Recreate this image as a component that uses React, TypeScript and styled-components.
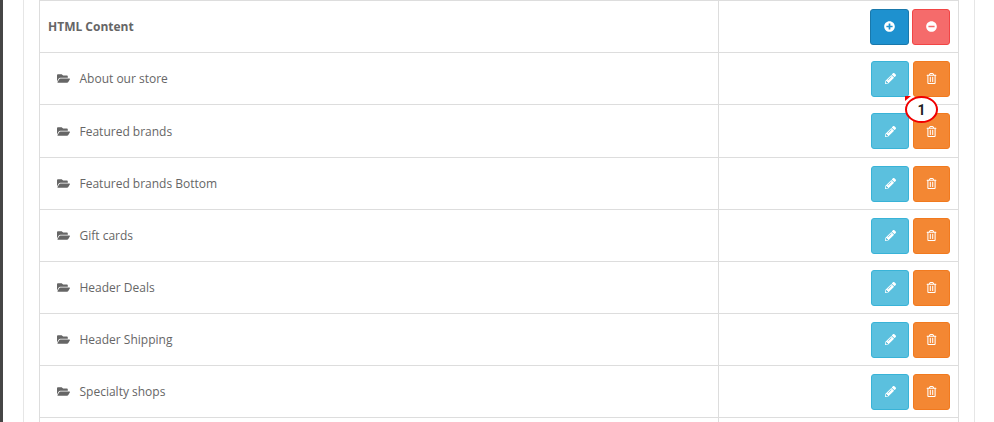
import styled, { createGlobalStyle } from 'styled-components';
import {
  FaFolderOpen,
  FaMinusCircle,
  FaPencilAlt,
  FaPlusCircle,
  FaRegTrashAlt,
} from 'react-icons/fa';

const GlobalStyle = createGlobalStyle`
  html, body {
    margin: 0;
    background: #fff;
    overflow: hidden;
  }
  body {
    font-family: 'Open Sans', 'Liberation Sans', sans-serif;
    color: #666;
  }
`;

const items = [
  { name: 'About our store', height: 52 },
  { name: 'Featured brands', height: 53 },
  { name: 'Featured brands Bottom', height: 52 },
  { name: 'Gift cards', height: 52 },
  { name: 'Header Deals', height: 52 },
  { name: 'Header Shipping', height: 52 },
  { name: 'Specialty shops', height: 52 },
];

export default function App() {
  return (
    <>
      <GlobalStyle />
      <Page>
        <Panel>
          <Table>
            <Row $height={52}>
              <HeadCell>HTML Content</HeadCell>
              <ActionCell $gap={3}>
                <Button $width={39} $icon={11} $color="#1e91cf" $border="#1978ab">
                  <FaPlusCircle />
                </Button>
                <Button $width={38} $icon={11} $color="#f56b6b" $border="#f24545">
                  <FaMinusCircle />
                </Button>
              </ActionCell>
            </Row>
            {items.map(({ name, height }) => (
              <Row key={name} $height={height}>
                <NameCell>
                  <FaFolderOpen />
                  <span>{name}</span>
                </NameCell>
                <ActionCell $gap={4}>
                  <Button $width={38} $icon={11} $color="#5bc0de" $border="#39b3d7">
                    <FaPencilAlt />
                  </Button>
                  <Button $width={37} $icon={11} $color="#f38733" $border="#f17a1f">
                    <FaRegTrashAlt />
                  </Button>
                </ActionCell>
              </Row>
            ))}
            <Row $height={52}>
              <NameCell />
              <ActionCell $gap={4} />
            </Row>
          </Table>
          <Callout>1</Callout>
        </Panel>
      </Page>
    </>
  );
}

const Page = styled.div`
  height: 422px;
  width: 994px;
  box-sizing: border-box;
  border-left: 3px solid #464646;
  padding-left: 20px;
  overflow: hidden;
`;

const Panel = styled.div`
  position: relative;
  width: 952px;
  height: 422px;
  box-sizing: border-box;
  border-left: 1px solid #e6e6e6;
  border-right: 1px solid #e6e6e6;
  padding-left: 15px;
  overflow: hidden;
`;

const Table = styled.div`
  width: 920px;
  box-sizing: border-box;
  border-top: 1px solid #ddd;
  border-left: 1px solid #ddd;
  border-right: 1px solid #ddd;
`;

const Row = styled.div<{ $height: number }>`
  display: grid;
  grid-template-columns: 678px 1fr;
  height: ${(p) => p.$height}px;
  box-sizing: border-box;
  border-bottom: 1px solid #ddd;
`;

const HeadCell = styled.div`
  display: flex;
  align-items: center;
  padding-left: 8px;
  font-size: 12px;
  font-weight: 700;
  color: #666;
`;

const NameCell = styled.div`
  display: flex;
  align-items: center;
  gap: 10px;
  padding-left: 17px;
  font-size: 12px;
  color: #666;

  & svg {
    width: 13px;
    height: 13px;
    color: #666;
  }

  & span {
    margin-left: -0.5px;
  }
`;

const ActionCell = styled.div<{ $gap: number }>`
  display: flex;
  align-items: center;
  justify-content: flex-end;
  gap: ${(p) => p.$gap}px;
  padding-right: 8px;
  border-left: 1px solid #ddd;
`;

const Button = styled.button<{
  $width: number;
  $icon: number;
  $color: string;
  $border: string;
}>`
  display: flex;
  align-items: center;
  justify-content: center;
  width: ${(p) => p.$width}px;
  height: 36px;
  padding: 0;
  border-radius: 3px;
  border: 1px solid ${(p) => p.$border};
  background: ${(p) => p.$color};
  color: #fff;

  & svg {
    width: ${(p) => p.$icon}px;
    height: ${(p) => p.$icon}px;
  }
`;

const Callout = styled.div`
  position: absolute;
  left: 881px;
  top: 96px;
  width: 33px;
  height: 27px;
  box-sizing: border-box;
  display: flex;
  align-items: center;
  justify-content: center;
  border: 2.5px solid #f00000;
  border-radius: 50%;
  background: #fff;
  font-family: Roboto, Arial, sans-serif;
  font-size: 14px;
  font-weight: 700;
  color: #222;

  &::before {
    content: '';
    position: absolute;
    left: -2.5px;
    top: -2.5px;
    width: 0;
    height: 0;
    border-bottom: 5px solid transparent;
    border-left: 6px solid #f00000;
  }
`;
